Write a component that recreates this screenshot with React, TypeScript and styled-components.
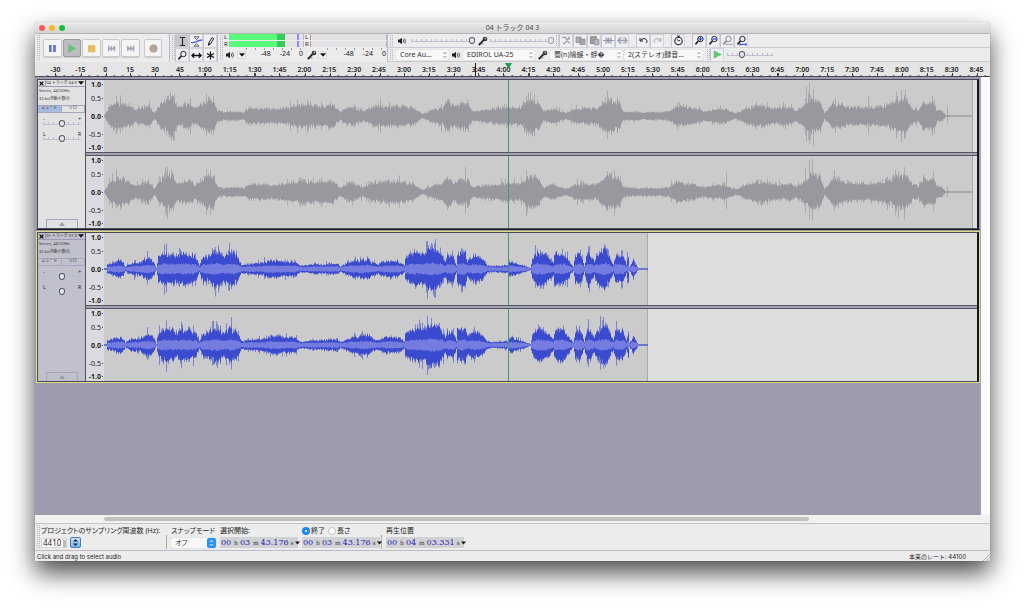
import React from "react";
import styled, { createGlobalStyle, css } from "styled-components";

const GlobalStyle = createGlobalStyle`
  * { box-sizing: border-box; }
  body {
    margin: 0;
    background: #fff;
    color: #1c1c1e;
    font-family: "Noto Sans", "Noto Sans CJK JP", sans-serif;
    font-size: 7px;
    line-height: 9px;
  }
  button, input, select { font: inherit; color: inherit; margin: 0; padding: 0; border: 0; background: none; border-radius: 0; }
  svg { display: block; }
`;

/* ---------- window frame ---------- */

const Page = styled.main`
  padding: 22px 34px 47px 35px;
  overflow: hidden;
`;

const AppWindow = styled.div`
  display: flex;
  flex-direction: column;
  min-height: calc(100vh - 69px);
  background: #ececec;
  border-radius: 3px 3px 0 0;
  box-shadow: 0 0 1px rgba(0, 0, 0, 0.4), 0 12px 24px rgba(0, 0, 0, 0.7);
`;

const TitleBar = styled.header`
  display: grid;
  grid-template-columns: 1fr auto 1fr;
  align-items: center;
  height: 12px;
  padding: 0 4px;
  border-bottom: 1px solid #b4b4ba;
  border-radius: 3px 3px 0 0;
  background: linear-gradient(#ebebeb, #d3d3d3);
`;

const Lights = styled.div`
  display: flex;
  gap: 4px;
`;

const Light = styled.button<{ $color: string }>`
  width: 6px;
  height: 6px;
  border-radius: 50%;
  background: ${(p) => p.$color};
`;

const Title = styled.h1`
  margin: 0;
  font-size: 7px;
  font-weight: 400;
  color: #444;
`;

/* ---------- toolbars ---------- */

const ToolDock = styled.div`
  display: flex;
  height: 28px;
`;

const Dock = styled.section<{ $width: number }>`
  display: flex;
  align-items: center;
  flex: 0 0 auto;
  width: ${(p) => p.$width}px;
  border-right: 1px solid #b9b9c6;
`;

const Grip = styled.span`
  flex: 0 0 4px;
  width: 4px;
  align-self: stretch;
  margin: 1px 0 1px 1px;
  background:
    linear-gradient(90deg, #ececec 1px, transparent 1px) 0 0 / 2px 2px,
    linear-gradient(#b6b6c0 1px, #e8e8ea 1px) 0 0 / 2px 2px;
`;

const TransportGroup = styled.div`
  display: grid;
  grid-template-columns: repeat(5, 1fr);
  gap: 1px;
  width: 97px;
  margin: 0 4px 0 3px;
`;

const TransportButton = styled.button<{ $pressed?: boolean }>`
  display: grid;
  place-items: center;
  min-width: 18px;
  height: 18px;
  border: 1px solid ${(p) => (p.$pressed ? "#9a9a9e" : "#c9c9cd")};
  border-radius: 2px;
  background: ${(p) => (p.$pressed ? "#bdbdc0" : "#f4f4f5")};
  box-shadow: 0 1px 1px rgba(0, 0, 0, 0.15);
`;

const ToolGrid = styled.div`
  display: grid;
  grid-template-columns: repeat(3, 14px);
  grid-template-rows: repeat(2, 14px);
`;

const IconButton = styled.button<{ $pressed?: boolean }>`
  display: grid;
  place-items: center;
  flex: 0 0 auto;
  width: 14px;
  height: 14px;
  border: 1px solid #d3d3da;
  border-left-color: #c4c4ce;
  background: ${(p) => (p.$pressed ? "#c6c6ca" : "#f0f0f2")};
`;

const ButtonGroup = styled.div`
  display: flex;
  margin-right: 7px;
`;

const ToolbarRows = styled.div`
  flex: 1 1 0;
  min-width: 0;
`;

const ToolbarRow = styled.div`
  display: flex;
  align-items: center;
  height: 14px;
  border-bottom: 1px solid #c9c9d4;
`;

const Spacer = styled.span<{ $width: number }>`
  flex: 0 0 ${(p) => p.$width}px;
`;

/* ---------- meters ---------- */

const Meter = styled.div<{ $width: number }>`
  width: ${(p) => p.$width}px;
  padding-left: 1px;
`;

const MeterChannels = styled.div`
  display: grid;
  grid-template-columns: 5px 1fr;
  grid-template-rows: 7px 7px;
  font-size: 6px;
  line-height: 7px;
`;

const MeterBar = styled.div<{ $live?: boolean }>`
  margin-bottom: 1px;
  border-right: 1px solid #b5b5c6;
  border-left: 1px solid ${(p) => (p.$live ? "#5cf57c" : "#c09a7c")};
  background: ${(p) =>
    p.$live
      ? "linear-gradient(90deg, #5afb7c 64%, #34cd58 64% 76%, #e4e4e6 76% 92%, #8c8cf0 92% 94%, #e4e4e6 94%)"
      : "#e2e2e4"};
`;

const MeterScale = styled.div`
  display: flex;
  align-items: center;
  height: 14px;
`;

const ScaleLabels = styled.div`
  display: flex;
  flex: 1;
  justify-content: flex-end;
  gap: 9px;
  align-self: flex-start;
  padding: 2px 1px 0 0;
  font-size: 7px;
  line-height: 8px;
  background: linear-gradient(90deg, #9a9aa6 1px, transparent 1px) 0 0 / 9px 2px repeat-x;
`;

const MenuArrow = styled.button`
  display: grid;
  place-items: center;
  width: 9px;
  height: 8px;
  border: 1px solid #d6d6dc;
  background: #f4f4f4;
`;

const IconCell = styled.span<{ $width: number }>`
  display: grid;
  place-items: center;
  flex: 0 0 ${(p) => p.$width}px;
`;

/* ---------- controls ---------- */

const Slider = styled.input.attrs({ type: "range" })<{ $width?: number; $dim?: boolean }>`
  appearance: none;
  flex: 0 0 auto;
  width: ${(p) => (p.$width ? p.$width + "px" : "100%")};
  height: 9px;
  background:
    linear-gradient(#c0c0d0, #c0c0d0) 0 5px / 100% 1px no-repeat,
    linear-gradient(90deg, #b8b8cc 1px, transparent 1px) 0 3px / 5px 2px repeat-x;
  &::-webkit-slider-thumb {
    appearance: none;
    width: 6px;
    height: 7px;
    border: 1px solid ${(p) => (p.$dim ? "#a2a2a2" : "#505860")};
    border-radius: 50% 50% 50% 50% / 40% 40% 60% 60%;
    background: #e6eaee;
  }
`;

const SelectBox = styled.span<{ $width: number }>`
  position: relative;
  flex: 0 0 auto;
  width: ${(p) => p.$width}px;
  height: 10px;
  border-radius: 2px;
  background: #f8f8f8;
  box-shadow: 0 0 1px rgba(0, 0, 0, 0.3);
  select {
    appearance: none;
    display: block;
    width: 100%;
    height: 10px;
    padding: 0 9px 0 4px;
    line-height: 10px;
    color: #333;
  }
  svg {
    position: absolute;
    right: 0;
    top: 0;
    pointer-events: none;
  }
`;

/* ---------- time ruler ---------- */

const TimeRuler = styled.div`
  position: relative;
  display: grid;
  grid-template-columns: repeat(38, minmax(0, 1fr));
  height: 15px;
  padding: 0 1px 0 8px;
  border-bottom: 1px solid #4b4b5d;
  background: #e5e5e6;
`;

const RulerCell = styled.span`
  display: flex;
  justify-content: center;
  padding-top: 3px;
  font-size: 7px;
  font-weight: 600;
  line-height: 9px;
  white-space: nowrap;
  background:
    linear-gradient(90deg, transparent 50%, #444 50% calc(50% + 1px), transparent calc(50% + 1px)) 0 100% / 100% 3px no-repeat,
    linear-gradient(90deg, transparent 50%, #777 50% calc(50% + 1px), transparent calc(50% + 1px)) 0 100% / calc(100% / 3) 1px repeat-x;
`;

const RulerMarker = styled.svg<{ $at: string }>`
  position: absolute;
  top: 1px;
  left: ${(p) => p.$at};
`;

/* ---------- tracks ---------- */

const Workspace = styled.div`
  display: flex;
  flex: 1;
  background: #fafafa;
`;

const TrackArea = styled.div`
  flex: 1;
  min-width: 0;
  padding: 1px 0 0 1px;
  border-right: 1px solid #a4a4b4;
  background: #9c9cae;
`;

const VScroll = styled.div`
  width: 9px;
  background: #fafafa;
`;

const Track = styled.article<{ $focused?: boolean }>`
  margin-bottom: 1px;
  border: 1px solid ${(p) => (p.$focused ? "#e0dc84" : "#9c9cae")};
  ${(p) => !p.$focused && css`border-bottom-color: #1c1c1c;`}
`;

const TrackInner = styled.div`
  display: flex;
  border: 1px solid #4c4c58;
  border-right: 2px solid #15151a;
`;

const Panel = styled.div<{ $focused?: boolean }>`
  display: flex;
  flex-direction: column;
  flex: 0 0 48px;
  border-right: 1px solid #55555f;
  background: ${(p) => (p.$focused ? "#c1c1cd" : "#e2e2e3")};
`;

const PanelHead = styled.div`
  display: flex;
  align-items: center;
  justify-content: space-between;
  height: 7px;
  border-bottom: 1px solid #9c9cb4;
`;

const PanelClose = styled.button`
  display: grid;
  place-items: center;
  width: 8px;
  height: 6px;
  border-right: 1px solid #9c9cb4;
`;

const PanelMenu = styled.button`
  display: grid;
  place-items: center;
  width: 8px;
  height: 6px;
`;

const PanelTitle = styled.h2`
  margin: 0;
  font-size: 4px;
  font-weight: 400;
  line-height: 6px;
`;

const PanelInfo = styled.p`
  margin: 0;
  padding-left: 1px;
  font-size: 4px;
  line-height: 8px;
  color: #333;
  white-space: nowrap;
`;

const PanelToggles = styled.div`
  display: grid;
  grid-template-columns: 1fr 1fr;
  height: 8px;
  margin-top: 2px;
`;

const Toggle = styled.button<{ $on?: boolean }>`
  border: 1px solid #a6a6bc;
  border-width: 1px 1px 1px 0;
  font-size: 4px;
  line-height: 4px;
  padding-bottom: 2px;
  background: ${(p) => (p.$on ? "#a8bbdd" : "transparent")};
`;

const PanelSlider = styled.label`
  display: grid;
  grid-template-columns: 1fr 1fr;
  margin: 0 4px 0 5px;
  padding-top: 4px;
  font-size: 5px;
  line-height: 4px;
  span:nth-child(2) { text-align: right; }
  input { grid-column: 1 / 3; margin-top: -2px; }
`;

const Collapse = styled.button`
  display: grid;
  place-items: center;
  width: 32px;
  height: 9px;
  margin: auto auto 0;
  border: 1px solid #a4a4bc;
  border-bottom: 0;
`;

const Channels = styled.div`
  display: grid;
  flex: 1;
  min-width: 0;
  grid-template-rows: 72px 72px;
  gap: 4px;
  background: linear-gradient(#55555f, #55555f 1px, #a2a2b4 1px, #a2a2b4 3px, #55555f 3px) 0 72px / 100% 4px no-repeat;
`;

const Channel = styled.div`
  display: grid;
  grid-template-columns: 18px minmax(0, 1fr);
`;

const Amplitude = styled.div`
  display: grid;
  grid-template-rows: 1fr 2fr 2fr 2fr 1fr;
  align-items: center;
  padding-right: 1px;
  text-align: right;
  font-size: 7px;
  background: #dadae0;
  span {
    justify-self: end;
    padding-right: 2px;
    white-space: nowrap;
    background: linear-gradient(#555, #555) 100% 50% / 1px 1px no-repeat;
  }
  span:nth-child(odd) { font-weight: 700; }
`;

const Wave = styled.svg`
  width: 100%;
  height: 72px;
  background: #dedede;
`;

/* ---------- bottom ---------- */

const HScroll = styled.div`
  height: 9px;
  padding: 2px 181px 3px 69px;
  border-bottom: 1px solid #c4c4cc;
  background: #f1f1f1;
`;

const HThumb = styled.div`
  height: 4px;
  border-radius: 2px;
  background: #c0c0c0;
`;

const SelectionBar = styled.footer`
  display: flex;
  height: 27px;
  border-bottom: 1px solid #bcbcc8;
`;

const Field = styled.div<{ $width: number; $divided?: boolean }>`
  flex: 0 0 ${(p) => p.$width}px;
  display: flex;
  flex-direction: column;
  gap: 2px;
  padding: 2px 0 0 1px;
  white-space: nowrap;
  font-feature-settings: "palt";
  ${(p) =>
    p.$divided &&
    css`
      background: linear-gradient(#aaa, #aaa) calc(100% - 3px) 11px / 1px 14px no-repeat;
    `}
`;

const FieldRow = styled.div`
  display: flex;
  align-items: center;
  height: 11px;
`;

const RateInput = styled.input`
  width: 26px;
  height: 10px;
  padding: 0 5px 0 1px;
  border: 1px solid #d4d4d4;
  background: #fff linear-gradient(#bbb, #bbb) 100% 1px / 3px 7px no-repeat;
  font-size: 8px;
`;

const Stepper = styled.button`
  display: grid;
  place-items: center;
  width: 11px;
  height: 11px;
  margin-left: 3px;
  border: 1px solid #4d7cb0;
  border-radius: 2px;
  background: linear-gradient(#cfe4fa, #6ab4f4);
`;

const TimeBox = styled.div`
  display: flex;
  align-items: center;
  gap: 2px;
  width: 78px;
  height: 11px;
  padding-left: 1px;
  background: #d2d2d5;
  font-family: "DejaVu Serif", serif;
  font-size: 6px;
  color: #333;
`;

const TimePart = styled.input<{ $width: number }>`
  width: ${(p) => p.$width}px;
  height: 11px;
  font-size: 8px;
  color: #2323b4;
`;

const TimeMenu = styled.button`
  display: grid;
  place-items: center;
  width: 5px;
  height: 11px;
  margin-left: -1px;
`;

const RadioRow = styled.div`
  display: flex;
`;

const RadioLabel = styled.label`
  display: flex;
  align-items: center;
  gap: 1px;
  margin-right: 3px;
  height: 9px;
  input {
    appearance: none;
    width: 8px;
    height: 8px;
    border: 1px solid #c4c4c4;
    border-radius: 50%;
    background: #fff;
  }
  input:checked {
    border: 3px solid #1a86f8;
  }
`;

const StatusBar = styled.div`
  display: flex;
  align-items: center;
  justify-content: space-between;
  height: 10px;
  padding-left: 2px;
  font-family: Inter, "Noto Sans CJK JP", sans-serif;
  font-size: 6px;
`;

const StatusRate = styled.span`
  display: flex;
  align-items: flex-end;
  gap: 17px;
`;

/* ---------- waveform data: [position, peak height] ---------- */

type Point = [number, number];

const songA: Point[] = [
  [0, 1], [1, 3], [6, 11], [13, 15], [23, 12], [31, 6], [41, 10], [44, 11], [50, 3], [54, 10], [63, 18], [68, 20],
  [73, 9], [84, 13], [91, 8], [98, 13], [103, 17], [109, 16], [113, 6], [119, 4], [126, 5], [139, 4], [144, 8], [159, 8],
  [166, 7], [183, 9], [199, 12], [216, 10], [228, 12], [236, 4], [246, 10], [259, 5], [269, 10], [289, 11], [308, 9],
  [318, 2], [329, 7], [338, 9], [343, 17], [349, 11], [363, 14], [368, 5], [383, 7], [399, 9], [416, 9], [423, 17],
  [433, 16], [439, 5], [449, 8], [461, 3], [473, 8], [493, 8], [503, 18], [514, 15], [519, 5], [536, 4], [556, 4],
  [564, 5], [573, 11], [589, 8], [599, 5], [619, 8], [631, 3], [643, 8], [653, 11], [669, 8], [686, 9], [691, 5],
  [703, 14], [706, 18], [716, 15], [720, 3], [729, 13], [749, 9], [769, 9], [786, 12], [791, 16], [801, 19], [808, 8],
  [814, 6], [819, 14], [829, 14], [833, 6], [838, 5], [841, 1], [856, 0], [869, 0],
];

const songB: Point[] = [
  [2, 1], [3, 5], [8, 6], [14, 9], [19, 7], [21, 2], [26, 6], [36, 7], [43, 12], [49, 8], [52, 1], [54, 13], [61, 18],
  [73, 14], [79, 17], [91, 14], [95, 4], [99, 14], [104, 13], [106, 16], [111, 20], [119, 13], [126, 18], [133, 14],
  [137, 4], [146, 6], [156, 6], [166, 9], [169, 10], [179, 8], [191, 8], [196, 3], [209, 5], [218, 5], [233, 6],
  [236, 3], [246, 8], [263, 11], [268, 7], [273, 5], [283, 9], [294, 8], [300, 4], [301, 12], [309, 17], [319, 17],
  [323, 22], [328, 23], [336, 19], [341, 8], [343, 14], [349, 14], [352, 4], [353, 17], [361, 18], [363, 10], [369, 14],
  [376, 13], [383, 4], [389, 3], [403, 4], [406, 8], [416, 5], [426, 1], [428, 10], [433, 19], [443, 14], [449, 6],
  [450, 16], [459, 17], [469, 2], [471, 14], [476, 18], [480, 3], [482, 14], [484, 19], [490, 8], [492, 14], [501, 22],
  [509, 5], [511, 15], [519, 15], [522, 4], [524, 14], [525, 2], [529, 9], [533, 2], [534, 0], [544, 0],
];

function random(seed: number) {
  let s = seed;
  return () => {
    s = (s * 1664525 + 1013904223) % 4294967296;
    return s / 4294967296;
  };
}

function levelAt(points: Point[], x: number) {
  for (let i = 1; i < points.length; i++) {
    const [x1, y1] = points[i];
    const [x0, y0] = points[i - 1];
    if (x <= x1) return x < x0 ? 0 : y0 + ((y1 - y0) * (x - x0)) / (x1 - x0);
  }
  return 0;
}

function outline(top: number[], bottom: number[]) {
  const up = top.map((v, i) => `${i},${(36 - v).toFixed(1)}H${i + 1}`);
  const down = bottom.map((v, i) => `${i + 1},${(36 + v).toFixed(1)}H${i}`).reverse();
  return `M${up.join("L")}L${down.join("L")}Z`;
}

function buildWave(points: Point[], length: number, seed: number, peaks: Point[]) {
  const next = random(seed);
  const body: number[][] = [[], []];
  const spikes: number[][] = [[], []];
  const core: number[][] = [[], []];
  for (let x = 0; x < length; x++) {
    const level = levelAt(points, x);
    const burst = next() > 0.9 ? 1.4 : 1;
    const shared = next();
    [0, 1].forEach((side) => {
      const v = Math.max(0.4, level * (0.64 + 0.24 * shared + 0.2 * next()));
      const peak = peaks.find((p) => p[0] === x);
      body[side].push(v);
      spikes[side].push(peak ? peak[1] * (side ? 0.85 : 1) : Math.min(34, v * (burst + 0.25 * next())));
      core[side].push(Math.min(v * 0.7, Math.pow(level, 0.6) * (0.75 + 0.3 * next())));
    });
  }
  return {
    body: outline(body[0], body[1]),
    spikes: outline(spikes[0], spikes[1]),
    core: outline(core[0], core[1]),
  };
}

interface TrackData {
  title: string;
  focused: boolean;
  muted: boolean;
  length: number;
  points: Point[];
  seeds: number[];
  peaks: Point[][];
}

const tracks: TrackData[] = [
  {
    title: "04 トラック 04 3", focused: false, muted: true, length: 869, points: songA, seeds: [11, 57],
    peaks: [
      [[66, 24], [102, 23], [343, 17], [424, 23], [702, 30], [705, 33], [764, 20], [801, 26], [843, 9]],
      [[61, 25], [67, 22], [361, 25], [503, 21], [622, 20], [701, 25], [705, 32], [708, 33], [730, 22], [843, 6]],
    ],
  },
  {
    title: "01 トラック 01 3", focused: true, muted: false, length: 544, points: songB, seeds: [23, 91],
    peaks: [
      [[43, 18], [75, 21], [108, 21], [322, 28], [327, 26], [484, 22], [501, 23], [523, 17]],
      [[43, 18], [108, 24], [112, 24], [327, 27], [484, 26], [496, 29], [499, 28], [523, 9]],
    ],
  },
];

/* ---------- icons ---------- */

const Speaker = () => (
  <svg width="9" height="8" viewBox="0 0 9 8">
    <path d="M0 2.6h1.7L4 .8v6.4L1.7 5.4H0z" fill="#222" />
    <path d="M5.2 2.4q1 1.6 0 3.2M6.6 1.4q1.8 2.6 0 5.2" fill="none" stroke="#333" strokeWidth=".8" />
  </svg>
);

const Mic = () => (
  <svg width="10" height="10" viewBox="0 0 10 10">
    <path d="M.8 9.2 5.6 4.2" stroke="#222" strokeWidth="1.8" />
    <circle cx="7" cy="3" r="2.3" fill="#333" />
    <circle cx="7.3" cy="2.6" r="1" fill="#aaa" />
    <path d="M3.6 8.8 5.4 7" stroke="#444" strokeWidth=".7" />
  </svg>
);

const Down = ({ w = 6 }: { w?: number }) => (
  <svg width={w} height="4" viewBox="0 0 6 4"><path d="M0 .2h6L3 3.8z" fill="#111" /></svg>
);

const Lens = ({ color = "#222", mark }: { color?: string; mark?: React.ReactNode }) => (
  <svg width="11" height="11" viewBox="0 0 11 11" fill="none">
    <circle cx="6.4" cy="4" r="2.7" stroke={color} strokeWidth="1" fill="#eef" />
    <path d="M4.4 6 1.4 9.4" stroke={color} strokeWidth="1.6" />
    {mark}
  </svg>
);

const glyphs: Record<string, React.ReactNode> = {
  cursor: <path d="M3 1.5h1.7l.8.6.8-.6H8M5.5 2v7M3 9.5h1.7l.8-.6.8.6H8" stroke="#222" strokeWidth="1.1" />,
  envelope: (
    <>
      <path d="M3 .8h5L5.5 3.6zM3 10.2h5L5.5 7.6z" stroke="#444" strokeWidth=".8" />
      <path d="M0 6.6q3 .2 5.5-1T11 4" stroke="#4a62e0" strokeWidth="1.3" />
    </>
  ),
  pencil: <path d="m3.4 9.4.4-2.6L7 1.6l1.7 1.1-3.2 5.2zM4 7l1.4 1" stroke="#222" />,
  shift: <path d="M1 5.5h9M3.2 3.2.9 5.5l2.3 2.3M7.8 3.2l2.3 2.3-2.3 2.3" stroke="#111" strokeWidth="1.3" />,
  multi: <path d="M5.5 1.4v8.2M2 3.4l7 4.2M9 3.4 2 7.6" stroke="#111" strokeWidth="1.2" />,
  cut: <path d="M1.4 2.4h3L7 6.8l2 1.6M8.6 1.6 4.2 7.8 2 9.4M5 4.4l4-.6" stroke="#9a9a9e" strokeWidth="1.1" />,
  copy: (
    <>
      <path d="M1 2h5v5.6H1z" fill="#aaaab4" stroke="#8e8e98" strokeWidth=".8" />
      <path d="M5 4h5v5.6H5z" fill="#a4a4ae" stroke="#8e8e98" strokeWidth=".8" />
    </>
  ),
  paste: (
    <>
      <path d="M1.4 1.6h6v7h-6z" fill="#a59e98" stroke="#88827e" strokeWidth=".8" />
      <path d="M5 4.4h5v5.4H5z" fill="#b5b5c4" stroke="#8e8e9a" strokeWidth=".8" />
    </>
  ),
  trim: <path d="M0 5.5h11M3 2v7M8 2v7M4.4 3.4v4.2M5.6 2.6v5.8M6.8 3.4v4.2" stroke="#8f93ac" strokeWidth=".9" />,
  silence: <path d="M0 5.5h11M1.4 3.4v4.2M2.6 2.4v6.2M4 1.8v7.4M7 1.8v7.4M8.4 2.4v6.2M9.6 3.4v4.2" stroke="#9a9eb4" strokeWidth=".9" />,
  undo: <path d="M2 3v3h3M2.2 5.8C4 2.8 8.6 3 9 6.2c0 1-.4 1.6-1 2" stroke="#222" />,
  redo: <path d="M9 3v3H6M8.8 5.8C7 2.8 2.4 3 2 6.2c0 1 .4 1.6 1 2" stroke="#aaa" />,
  timer: (
    <>
      <circle cx="5.5" cy="6" r="3.7" stroke="#222" strokeWidth="1.1" />
      <path d="M4.2 1h2.6M5.5 1v1.4M5.5 6 4 4.2M5.5 6 7 5.4" stroke="#224" />
    </>
  ),
};

const Glyph = ({ name }: { name: string }) => (
  <svg width="11" height="11" viewBox="0 0 11 11" fill="none">{glyphs[name]}</svg>
);

const UpDown = () => (
  <svg width="8" height="10" viewBox="0 0 8 10" fill="none">
    <path d="M2.4 4 4 2.2 5.6 4M2.4 6 4 7.8 5.6 6" stroke="#888" strokeWidth=".8" />
  </svg>
);

const transport = [
  { label: "Pause", art: <path d="M2 2h2.6v7H2zM6.2 2h2.6v7H6.2z" fill="#5a6fe0" /> },
  { label: "Play", art: <path d="M2.5 1.5 9.8 5.5 2.5 9.5z" fill="#5cc876" stroke="#84b890" strokeWidth=".6" /> },
  { label: "Stop", art: <path d="M2.5 2.5h6.4v6.4H2.5z" fill="#f0bc52" stroke="#d9ac58" strokeWidth=".6" /> },
  { label: "Skip to start", art: <path d="M2 2.5h1.3v2.4L6.2 2.5v2.4L9.4 2.5v6L6.2 6.1v2.4L3.3 6.1v2.4H2z" fill="#a6a6b4" /> },
  { label: "Skip to end", art: <path d="M9.4 2.5H8.1v2.4L5.2 2.5v2.4L2 2.5v6l3.2-2.4v2.4l2.9-2.4v2.4h1.3z" fill="#a6a6b4" /> },
];

/* ---------- parts ---------- */

function Choice({ label, value, width }: { label: string; value: string; width: number }) {
  return (
    <SelectBox $width={width}>
      <select aria-label={label}><option>{value}</option></select>
      <UpDown />
    </SelectBox>
  );
}

function LevelMeter({ width, live, icon, label }: { width: number; live?: boolean; icon: React.ReactNode; label: string }) {
  return (
    <Meter $width={width}>
      <MeterChannels>
        <span>L</span><MeterBar $live={live} />
        <span>R</span><MeterBar $live={live} />
      </MeterChannels>
      <MeterScale>
        <IconCell $width={13}>{icon}</IconCell>
        <MenuArrow aria-label={label}><Down /></MenuArrow>
        <ScaleLabels><span>-48</span><span>-24</span><span>0</span></ScaleLabels>
      </MeterScale>
    </Meter>
  );
}

function WaveView({ track, index }: { track: TrackData; index: number }) {
  const wave = buildWave(track.points, track.length, track.seeds[index], track.peaks[index]);
  const [soft, solid] = track.focused ? ["#7c84cc", "#3a4bcf"] : ["#aaaaae", "#98989f"];
  return (
    <Channel>
      <Amplitude>
        <span>1.0</span><span>0.5</span><span>0.0</span><span>-0.5</span><span>-1.0</span>
      </Amplitude>
      <Wave viewBox="0 0 873 72" preserveAspectRatio="none">
        <rect width={track.length} height="72" fill="#cbcbcb" />
        <rect x={track.length - 1} width="1" height="72" fill="#a8a8a8" />
        <path d={wave.spikes} fill={soft} />
        <path d={wave.body} fill={solid} />
        {track.focused && <path d={wave.core} fill="#757ce0" />}
        <rect x="404" width="1" height="72" fill="#4f9470" />
      </Wave>
    </Channel>
  );
}

function TrackView({ track }: { track: TrackData }) {
  return (
    <Track $focused={track.focused}>
      <TrackInner>
        <Panel $focused={track.focused}>
          <PanelHead>
            <PanelClose aria-label="Close track">
              <svg width="5" height="5" viewBox="0 0 5 5"><path d="m.6.6 3.8 3.8M4.4.6.6 4.4" stroke="#000" strokeWidth="1.2" /></svg>
            </PanelClose>
            <PanelTitle>{track.title}</PanelTitle>
            <PanelMenu aria-label="Track menu"><Down /></PanelMenu>
          </PanelHead>
          <PanelInfo>Stereo, 44100Hz</PanelInfo>
          <PanelInfo>32-bit浮動小数点</PanelInfo>
          <PanelToggles>
            <Toggle $on={track.muted}>ミュート</Toggle>
            <Toggle>ソロ</Toggle>
          </PanelToggles>
          <PanelSlider><span>-</span><span>+</span><Slider aria-label="Gain" /></PanelSlider>
          <PanelSlider><span>L</span><span>R</span><Slider aria-label="Pan" /></PanelSlider>
          <Collapse aria-label="Collapse">
            <svg width="6" height="4" viewBox="0 0 6 4"><path d="M3 0 6 4H0z" fill="#9a9aaa" /></svg>
          </Collapse>
        </Panel>
        <Channels>
          <WaveView track={track} index={0} />
          <WaveView track={track} index={1} />
        </Channels>
      </TrackInner>
    </Track>
  );
}

function TimeField({ label, parts }: { label: string; parts: [string, string, string] }) {
  return (
    <TimeBox role="group" aria-label={label}>
      <TimePart $width={11} aria-label={label + " hours"} defaultValue={parts[0]} />h
      <TimePart $width={11} aria-label={label + " minutes"} defaultValue={parts[1]} />m
      <TimePart $width={28} aria-label={label + " seconds"} defaultValue={parts[2]} />s
      <TimeMenu aria-label={label + " format"}><Down w={5} /></TimeMenu>
    </TimeBox>
  );
}

function rulerText(i: number) {
  const t = (i - 2) * 15;
  return t < 60 ? String(t) : `${Math.floor(t / 60)}:${String(t % 60).padStart(2, "0")}`;
}

export default function App() {
  return (
    <Page>
      <GlobalStyle />
      <AppWindow>
        <TitleBar>
          <Lights>
            <Light $color="#fc5b57" aria-label="Close" />
            <Light $color="#fdb42c" aria-label="Minimize" />
            <Light $color="#15bf3d" aria-label="Zoom" />
          </Lights>
          <Title>04 トラック 04 3</Title>
        </TitleBar>

        <ToolDock>
          <Dock $width={135}>
            <Grip />
            <TransportGroup>
              {transport.map((b) => (
                <TransportButton key={b.label} aria-label={b.label} $pressed={b.label === "Play"}>
                  <svg width="11" height="11" viewBox="0 0 11 11">{b.art}</svg>
                </TransportButton>
              ))}
            </TransportGroup>
            <TransportButton aria-label="Record">
              <svg width="11" height="11" viewBox="0 0 11 11"><circle cx="5.5" cy="5.5" r="3.8" fill="#b3a698" stroke="#a79c94" strokeWidth=".6" /></svg>
            </TransportButton>
          </Dock>
          <Dock $width={48}>
            <Grip />
            <ToolGrid>
              <IconButton $pressed aria-label="Selection tool"><Glyph name="cursor" /></IconButton>
              <IconButton aria-label="Envelope tool"><Glyph name="envelope" /></IconButton>
              <IconButton aria-label="Draw tool"><Glyph name="pencil" /></IconButton>
              <IconButton aria-label="Zoom tool"><Lens /></IconButton>
              <IconButton aria-label="Time shift tool"><Glyph name="shift" /></IconButton>
              <IconButton aria-label="Multi-tool"><Glyph name="multi" /></IconButton>
            </ToolGrid>
          </Dock>
          <Dock $width={170}>
            <Grip />
            <LevelMeter width={81} live icon={<Speaker />} label="Playback meter" />
            <LevelMeter width={83} icon={<Mic />} label="Recording meter" />
          </Dock>
          <ToolbarRows>
            <ToolbarRow>
              <Grip />
              <IconCell $width={18}><Speaker /></IconCell>
              <Slider $width={64} defaultValue={100} aria-label="Playback volume" />
              <IconCell $width={15}><Mic /></IconCell>
              <Slider $width={64} $dim defaultValue={100} aria-label="Recording volume" />
              <Grip />
              <ButtonGroup>
                <IconButton aria-label="Cut"><Glyph name="cut" /></IconButton>
                <IconButton aria-label="Copy"><Glyph name="copy" /></IconButton>
                <IconButton aria-label="Paste"><Glyph name="paste" /></IconButton>
                <IconButton aria-label="Trim"><Glyph name="trim" /></IconButton>
                <IconButton aria-label="Silence"><Glyph name="silence" /></IconButton>
              </ButtonGroup>
              <ButtonGroup>
                <IconButton aria-label="Undo"><Glyph name="undo" /></IconButton>
                <IconButton aria-label="Redo"><Glyph name="redo" /></IconButton>
              </ButtonGroup>
              <ButtonGroup>
                <IconButton aria-label="Sync-lock"><Glyph name="timer" /></IconButton>
              </ButtonGroup>
              <ButtonGroup>
                <IconButton aria-label="Zoom in"><Lens mark={<path d="M4.6 4h3.6M6.4 2.2v3.6" stroke="#2b3fd8" strokeWidth="1.2" />} /></IconButton>
                <IconButton aria-label="Zoom out"><Lens mark={<path d="M4.6 4h3.6" stroke="#2b3fd8" strokeWidth="1.2" />} /></IconButton>
                <IconButton aria-label="Fit selection"><Lens color="#888" mark={<path d="M4 9.4h6M5 8.4l-1 1 1 1M9 8.4l1 1-1 1" stroke="#999" strokeWidth=".8" />} /></IconButton>
                <IconButton aria-label="Fit project"><Lens mark={<path d="M4 9.4h6M4 8v2.8M10 8v2.8" stroke="#2b3fd8" strokeWidth="1" />} /></IconButton>
              </ButtonGroup>
            </ToolbarRow>
            <ToolbarRow>
              <Grip />
              <Spacer $width={3} />
              <Choice label="Audio host" value="Core Au..." width={53} />
              <IconCell $width={14}><Speaker /></IconCell>
              <Choice label="Output device" value="EDIROL UA-25" width={72} />
              <IconCell $width={15}><Mic /></IconCell>
              <Choice label="Input device" value="蜀(n)鳩蜈・蜉�" width={73} />
              <Spacer $width={1} />
              <Choice label="Input channels" value="2(ステレオ)録音..." width={79} />
              <Spacer $width={2} />
              <Grip />
              <IconButton aria-label="Play at speed">
                <svg width="9" height="9" viewBox="0 0 9 9"><path d="M1 .8 8.4 4.5 1 8.2z" fill="#4fd070" stroke="#78b088" strokeWidth=".5" /></svg>
              </IconButton>
              <Spacer $width={3} />
              <Slider $width={46} defaultValue={30} aria-label="Playback speed" />
            </ToolbarRow>
          </ToolbarRows>
        </ToolDock>

        <TimeRuler>
          {Array.from({ length: 38 }, (_, i) => <RulerCell key={i}>{rulerText(i)}</RulerCell>)}
          <RulerMarker $at="46.1%" width="1" height="13"><rect width="1" height="13" fill="#222" /></RulerMarker>
          <RulerMarker $at="49.2%" width="7" height="6" viewBox="0 0 7 6"><path d="M0 0h7L3.5 6z" fill="#18a048" /></RulerMarker>
        </TimeRuler>

        <Workspace>
          <TrackArea>
            {tracks.map((t) => <TrackView key={t.title} track={t} />)}
          </TrackArea>
          <VScroll />
        </Workspace>
        <HScroll><HThumb /></HScroll>

        <SelectionBar>
          <Grip />
          <Field $width={130} $divided>
            <label htmlFor="rate">プロジェクトのサンプリング周波数 (Hz):</label>
            <FieldRow>
              <RateInput id="rate" defaultValue="44100" />
              <Stepper aria-label="Choose rate">
                <svg width="5" height="7" viewBox="0 0 5 7"><path d="M2.5 0 5 2.6H0zM2.5 7 0 4.4h5z" fill="#123" /></svg>
              </Stepper>
            </FieldRow>
          </Field>
          <Field $width={49}>
            <label htmlFor="snap">スナップモード</label>
            <FieldRow>
              <SelectBox $width={45}>
                <select id="snap"><option>オフ</option></select>
                <svg width="9" height="10" viewBox="0 0 9 10" fill="none">
                  <rect width="9" height="10" rx="2" fill="#2a90fa" />
                  <path d="M2.8 4 4.5 2.2 6.2 4M2.8 6l1.7 1.8L6.2 6" stroke="#fff" strokeWidth=".9" />
                </svg>
              </SelectBox>
            </FieldRow>
          </Field>
          <Field $width={82}>
            <span>選択開始:</span>
            <TimeField label="選択開始" parts={["00", "03", "43.176"]} />
          </Field>
          <Field $width={84} $divided>
            <RadioRow>
              <RadioLabel><input type="radio" name="end" defaultChecked />終了</RadioLabel>
              <RadioLabel><input type="radio" name="end" />長さ</RadioLabel>
            </RadioRow>
            <TimeField label="終了" parts={["00", "03", "43.176"]} />
          </Field>
          <Field $width={82}>
            <span>再生位置</span>
            <TimeField label="再生位置" parts={["00", "04", "03.331"]} />
          </Field>
        </SelectionBar>
        <StatusBar>
          <span>Click and drag to select audio</span>
          <StatusRate>
            本来のレート: 44100
            <svg width="7" height="7" viewBox="0 0 7 7"><path d="M0 7 7 0M3 7l4-4M5.4 7 7 5.4" stroke="#999" strokeWidth=".7" /></svg>
          </StatusRate>
        </StatusBar>
      </AppWindow>
    </Page>
  );
}
